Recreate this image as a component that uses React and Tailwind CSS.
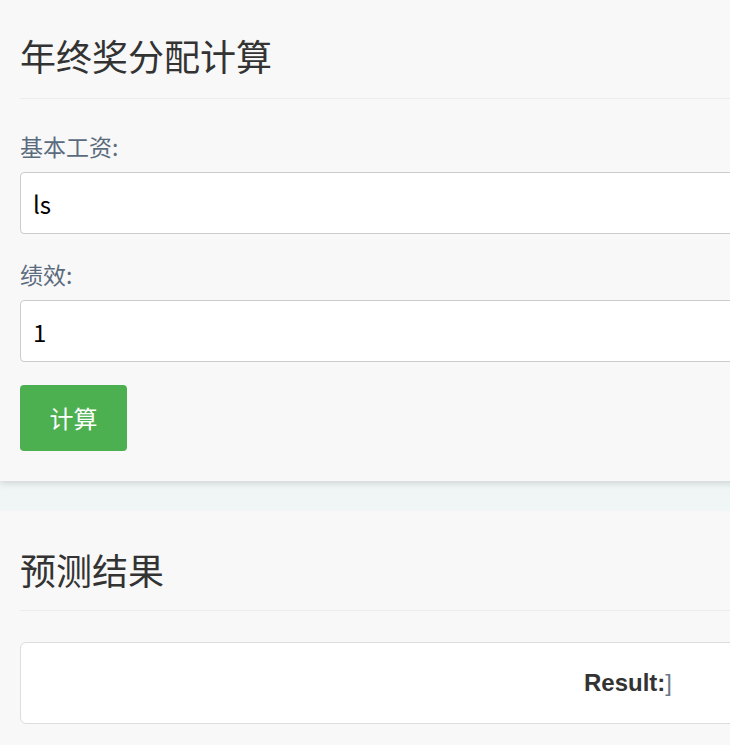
import { useState } from 'react'

const cjk = 'font-["Microsoft_YaHei","Noto_Sans_CJK_SC",sans-serif]'

function Field({ label, value, onChange }) {
  return (
    <div>
      <label className="block text-[23px] leading-[30px] text-[#5b6b7e] mb-[11px]">{label}</label>
      <input
        type="text"
        value={value}
        onChange={(e) => onChange(e.target.value)}
        className={`block w-full h-[62px] px-[12px] bg-white border border-[#cccccc] rounded-[4px] text-[24px] text-black outline-none ${cjk}`}
      />
    </div>
  )
}

export default function App() {
  const [salary, setSalary] = useState('ls')
  const [perf, setPerf] = useState('1')
  const [result, setResult] = useState(']')

  return (
    <div className={`min-h-screen w-full overflow-hidden bg-[#f0f6f6] ${cjk}`}>
      <div className="w-[1256px]">
        {/* form card */}
        <div className="bg-[#f8f8f8] px-5 pt-[34px] pb-[30px] shadow-[0_3px_6px_rgba(0,0,0,0.12)]">
          <h2 className="text-[36px] leading-[43px] text-[#333] pb-[21px] border-b border-[#ececec]">
            年终奖分配计算
          </h2>
          <div className="pt-[32px]">
            <Field label="基本工资:" value={salary} onChange={setSalary} />
          </div>
          <div className="pt-[25px]">
            <Field label="绩效:" value={perf} onChange={setPerf} />
          </div>
          <button
            type="button"
            onClick={() => setResult(']')}
            className="mt-[23px] h-[66px] w-[107px] rounded-[4px] bg-[#4caf50] text-white text-[24px]"
          >
            计算
          </button>
        </div>

        {/* result card */}
        <div className="mt-[30px] bg-[#f8f8f8] px-5 pt-[37px] pb-[30px]">
          <h2 className="text-[36px] leading-[43px] text-[#333] pb-[19px] border-b border-[#ececec]">
            预测结果
          </h2>
          <div className="mt-[31px] h-[82px] bg-white border border-[#dddddd] rounded-[6px] flex items-center justify-center">
            <span className='font-["Liberation_Sans",Arial,sans-serif] text-[24px] text-[#333]'>
              <b>Result:</b>
              <span className="text-[#6b7a8a] font-normal">{result}</span>
            </span>
          </div>
        </div>
      </div>
    </div>
  )
}
